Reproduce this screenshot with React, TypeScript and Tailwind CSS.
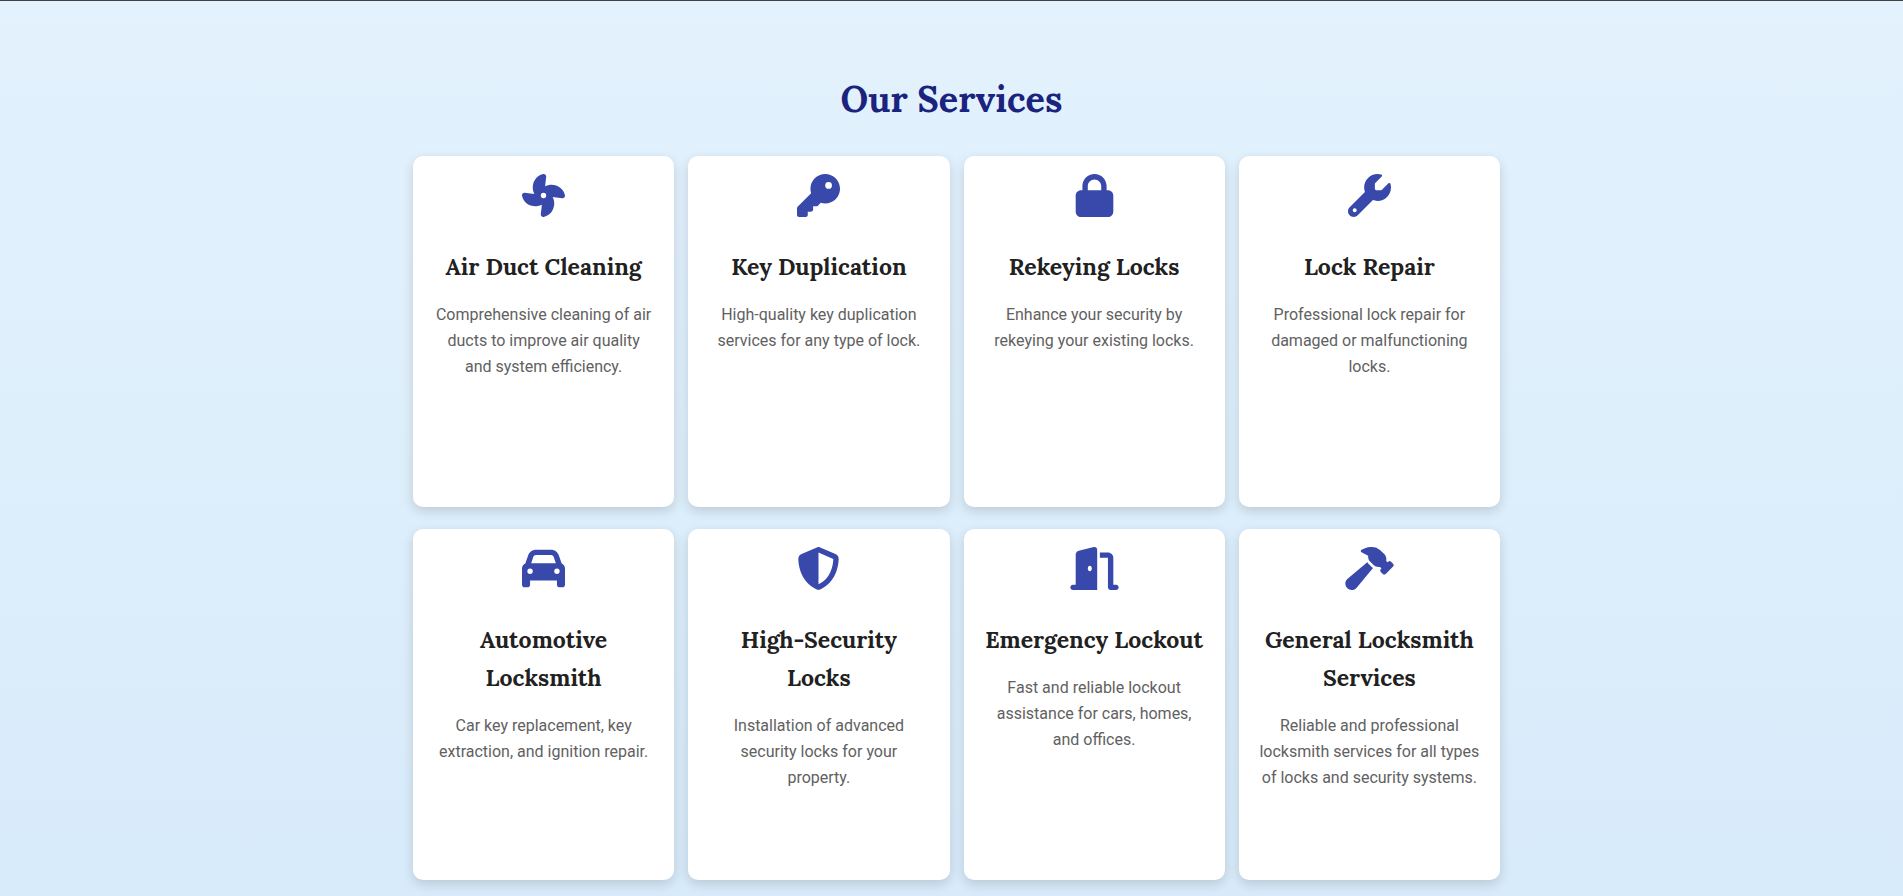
import type { IconType } from "react-icons";
import {
  FaCar,
  FaDoorOpen,
  FaFan,
  FaHammer,
  FaKey,
  FaLock,
  FaShieldHalved,
  FaWrench,
} from "react-icons/fa6";

type Service = { icon: IconType; title: string; text: string };

const services: Service[] = [
  {
    icon: FaFan,
    title: "Air Duct Cleaning",
    text: "Comprehensive cleaning of air ducts to improve air quality and system efficiency.",
  },
  {
    icon: FaKey,
    title: "Key Duplication",
    text: "High-quality key duplication services for any type of lock.",
  },
  {
    icon: FaLock,
    title: "Rekeying Locks",
    text: "Enhance your security by rekeying your existing locks.",
  },
  {
    icon: FaWrench,
    title: "Lock Repair",
    text: "Professional lock repair for damaged or malfunctioning locks.",
  },
  {
    icon: FaCar,
    title: "Automotive Locksmith",
    text: "Car key replacement, key extraction, and ignition repair.",
  },
  {
    icon: FaShieldHalved,
    title: "High-Security Locks",
    text: "Installation of advanced security locks for your property.",
  },
  {
    icon: FaDoorOpen,
    title: "Emergency Lockout",
    text: "Fast and reliable lockout assistance for cars, homes, and offices.",
  },
  {
    icon: FaHammer,
    title: "General Locksmith Services",
    text: "Reliable and professional locksmith services for all types of locks and security systems.",
  },
];

function ServiceCard({ icon: Icon, title, text }: Service) {
  return (
    <article className="flex min-h-[351px] flex-col items-center rounded-[10px] bg-white px-5 pt-[18px] pb-4 text-center shadow-[0_4px_12px_rgba(0,0,0,0.15)]">
      <Icon
        className="h-[43px] w-[49px] text-[#3949ab]"
        aria-hidden="true"
      />
      <h3 className="mt-[31px] font-['Lora','Liberation_Serif',serif] text-[23px] leading-[38px] font-bold text-[#212121]">
        {title}
      </h3>
      <p className="mt-4 text-base leading-[26px] text-[#616161]">{text}</p>
    </article>
  );
}

export default function App() {
  return (
    <section className="min-h-screen border-t border-[#424242] bg-linear-to-b from-[#e3f2fd] to-[#d8ebfa] px-4 pt-[69px] pb-4 font-['Roboto',sans-serif]">
      <h2 className="text-center font-['Lora','Liberation_Serif',serif] text-4xl leading-[58px] font-bold text-[#1a237e]">
        Our Services
      </h2>
      <div className="mx-auto mt-7 grid max-w-[1097px] grid-cols-1 gap-x-[14px] gap-y-[22px] pl-[10px] sm:grid-cols-2 lg:grid-cols-4">
        {services.map((service) => (
          <ServiceCard key={service.title} {...service} />
        ))}
      </div>
    </section>
  );
}
